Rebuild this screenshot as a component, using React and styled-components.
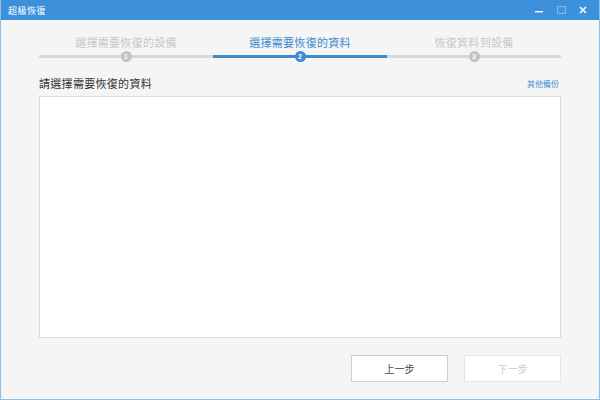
import React from 'react';
import styled, { createGlobalStyle } from 'styled-components';

const GlobalStyle = createGlobalStyle`
  html, body {
    margin: 0;
    padding: 0;
    background: #f5f5f5;
  }
  * { box-sizing: border-box; }
`;

const Window = styled.div`
  width: 600px;
  height: 400px;
  display: flex;
  flex-direction: column;
  background: #f5f5f5;
  border: 1px solid #8fbde6;
  border-top: none;
  font-family: "Noto Sans CJK TC", "Noto Sans", sans-serif;
  overflow: hidden;
`;

const TitleBar = styled.div`
  height: 20px;
  margin: 0 -1px;
  background: #3d90da;
  display: flex;
  align-items: center;
  padding: 0 6px 0 8px;
  color: #fff;
  font-size: 9px;
`;

const TitleText = styled.span`
  flex: 1;
  letter-spacing: 0.5px;
`;

const Control = styled.span`
  width: 22px;
  height: 20px;
  display: flex;
  align-items: center;
  justify-content: center;
  opacity: ${p => (p.$dim ? 0.35 : 1)};
`;

const Body = styled.div`
  flex: 1;
  display: flex;
  flex-direction: column;
  padding: 0 37px 16px 37px;
  border-left: 1px solid #e8f1fa;
  border-right: 1px solid #e8f1fa;
`;

const Steps = styled.div`
  display: grid;
  grid-template-columns: repeat(3, 1fr);
  margin-top: 14px;
`;

const Step = styled.div`
  display: flex;
  flex-direction: column;
  align-items: center;
`;

const StepLabel = styled.div`
  font-size: 11px;
  line-height: 16px;
  color: ${p => (p.$active ? '#3d8ad0' : '#c8c8c8')};
  letter-spacing: 0.3px;
`;

const Track = styled.div`
  position: relative;
  width: 100%;
  height: 12px;
  display: flex;
  align-items: center;
  justify-content: center;

  &::before {
    content: '';
    position: absolute;
    left: 0;
    right: 0;
    top: 5px;
    height: 3px;
    background: ${p => (p.$active ? '#3d8ad0' : '#d8d8d8')};
  }
`;

const Dot = styled.span`
  position: relative;
  width: 11px;
  height: 11px;
  border-radius: 50%;
  background: ${p => (p.$active ? '#3d8ad0' : '#c4c4c4')};
  color: #fff;
  font-size: 7px;
  line-height: 11px;
  text-align: center;
  font-family: "Liberation Sans", sans-serif;
  font-weight: bold;
`;

const Header = styled.div`
  display: flex;
  align-items: center;
  justify-content: space-between;
  margin-top: 11px;
  height: 20px;
`;

const Heading = styled.span`
  font-size: 11px;
  color: #333;
  letter-spacing: 0.3px;
`;

const OtherLink = styled.a`
  font-size: 8px;
  color: #3d8ad0;
  text-decoration: none;
  margin-right: 2px;
`;

const ListBox = styled.div`
  margin-top: 3px;
  height: 242px;
  background: #fff;
  border: 1px solid #dcdcdc;
`;

const Footer = styled.div`
  display: flex;
  justify-content: flex-end;
  gap: 16px;
  margin-top: 17px;
`;

const Button = styled.button`
  width: 97px;
  height: 27px;
  background: #fff;
  border: 1px solid ${p => (p.disabled ? '#e6e6e6' : '#cfcfcf')};
  color: ${p => (p.disabled ? '#cccccc' : '#444')};
  font-family: "Noto Sans CJK TC", "Noto Sans", sans-serif;
  font-size: 10px;
  padding: 0;
`;

const steps = ['選擇需要恢復的設備', '選擇需要恢復的資料', '恢復資料到設備'];

export default function App() {
  return (
    <>
      <GlobalStyle />
      <Window>
        <TitleBar>
          <TitleText>超級恢復</TitleText>
          <Control>
            <svg width="8" height="8" viewBox="0 0 8 8"><rect x="0" y="5" width="8" height="1.4" fill="#fff" /></svg>
          </Control>
          <Control $dim>
            <svg width="9" height="8" viewBox="0 0 9 8"><rect x="0.6" y="0.6" width="7.8" height="6.8" fill="none" stroke="#fff" strokeWidth="1.2" /></svg>
          </Control>
          <Control>
            <svg width="8" height="8" viewBox="0 0 8 8"><path d="M1 1 L7 7 M7 1 L1 7" stroke="#fff" strokeWidth="1.6" /></svg>
          </Control>
        </TitleBar>
        <Body>
          <Steps>
            {steps.map((s, i) => (
              <Step key={s}>
                <StepLabel $active={i === 1}>{s}</StepLabel>
                <Track $active={i === 1}>
                  <Dot $active={i === 1}>{i + 1}</Dot>
                </Track>
              </Step>
            ))}
          </Steps>
          <Header>
            <Heading>請選擇需要恢復的資料</Heading>
            <OtherLink href="#">其他備份</OtherLink>
          </Header>
          <ListBox />
          <Footer>
            <Button>上一步</Button>
            <Button disabled>下一步</Button>
          </Footer>
        </Body>
      </Window>
    </>
  );
}
